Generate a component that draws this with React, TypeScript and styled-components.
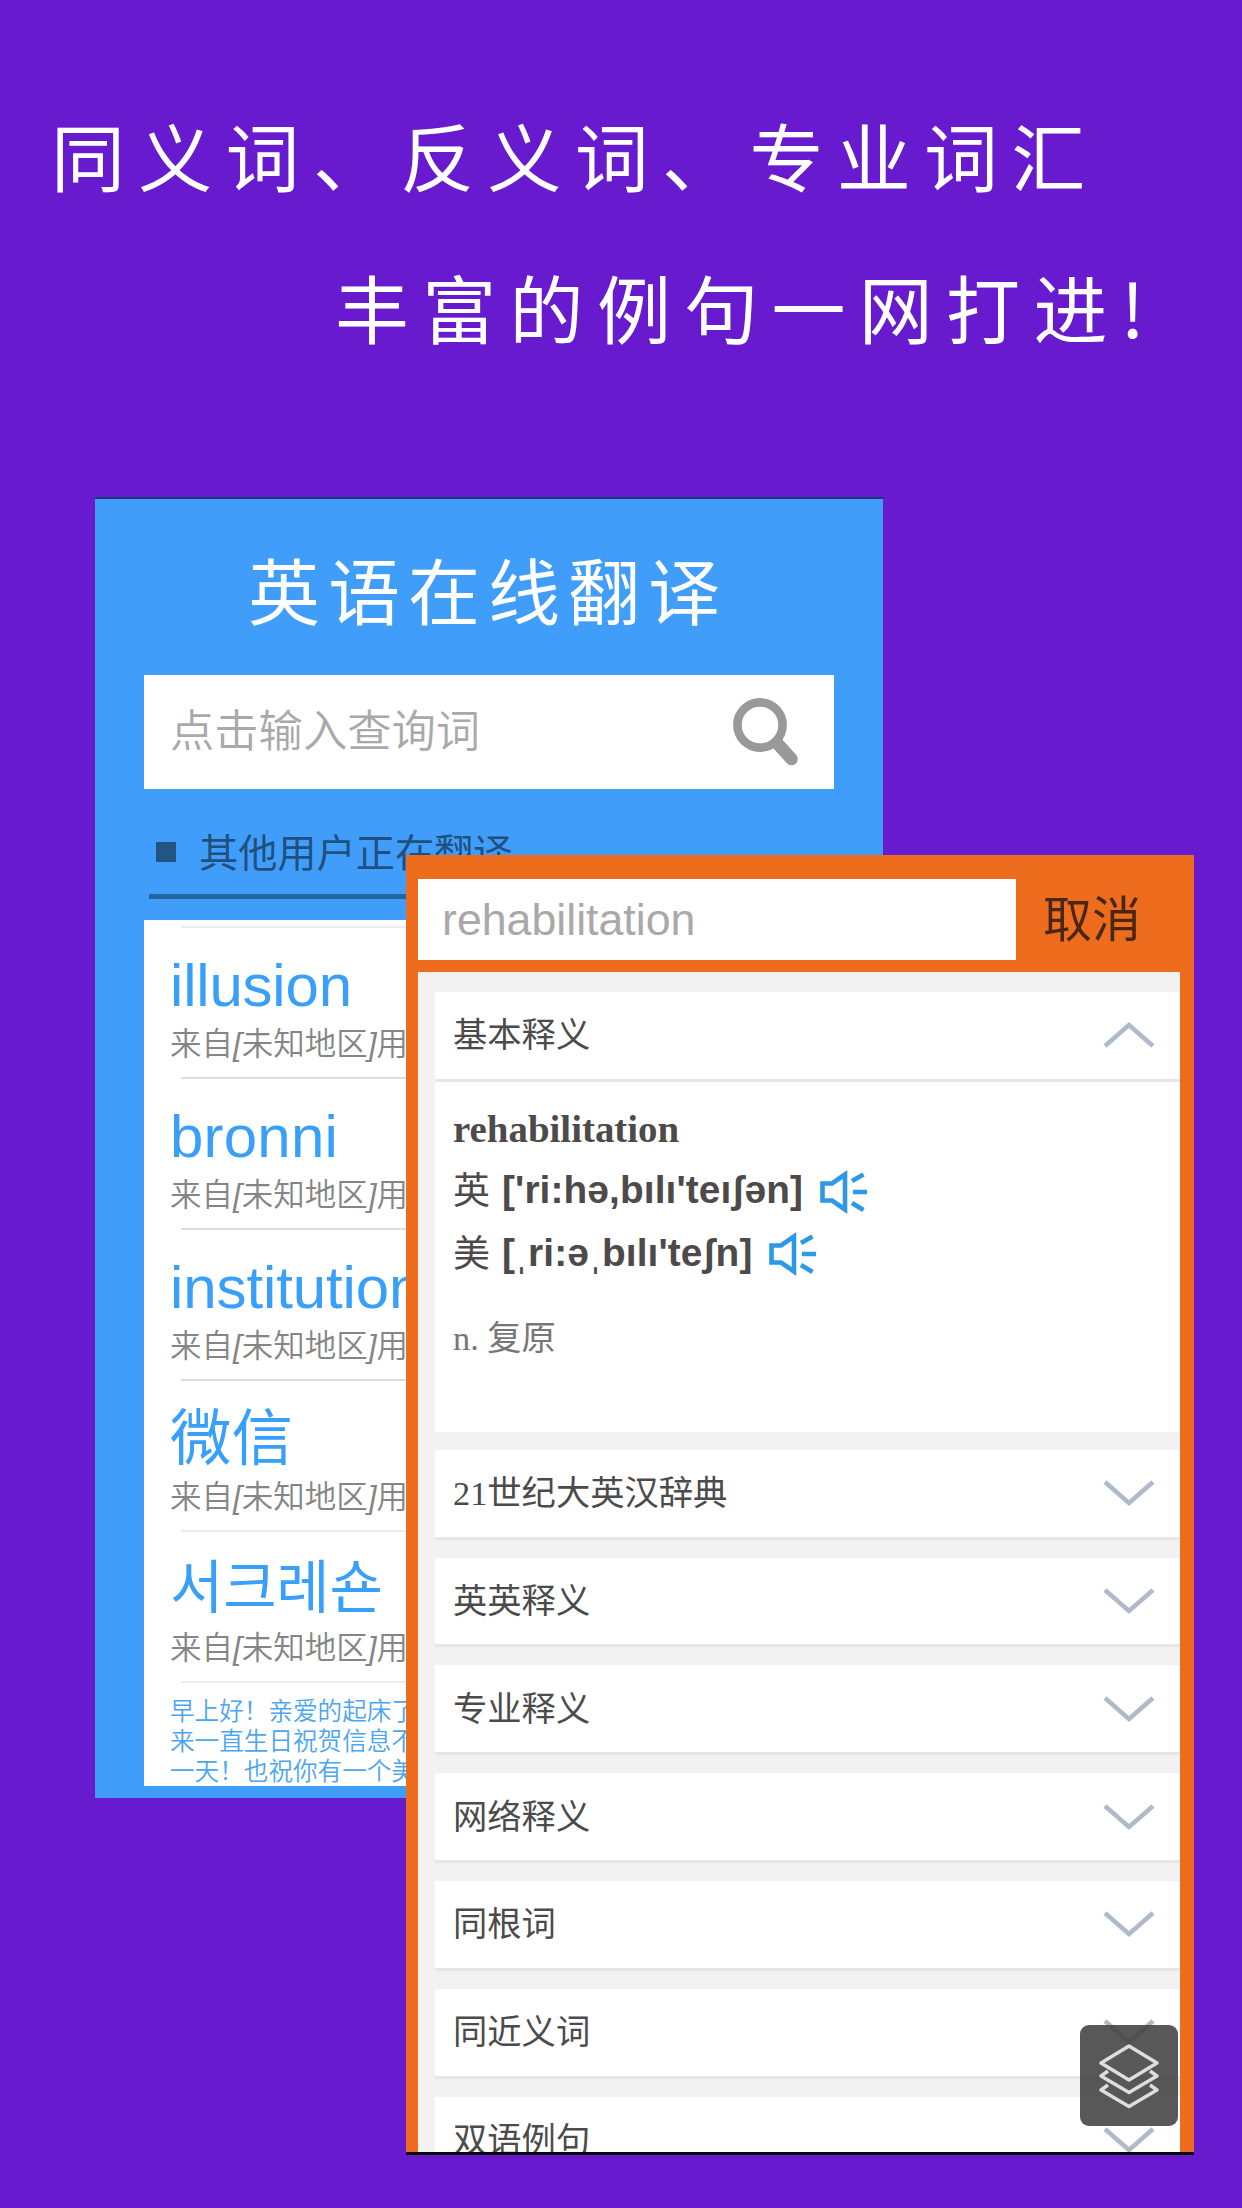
import React from 'react';
import styled, { createGlobalStyle } from 'styled-components';

const sans = `"Liberation Sans", "Noto Sans CJK SC", "Noto Sans CJK KR", sans-serif`;
const serif = `"Liberation Serif", "Noto Sans CJK SC", serif`;
const brush = `KaiTi, STKaiti, "AR PL UKai CN", "Noto Sans CJK SC", sans-serif`;

const Global = createGlobalStyle`
  *, *::before, *::after { box-sizing: border-box; }
  html, body { margin: 0; padding: 0; background: #681bce; }
`;

const Poster = styled.main`
  position: relative;
  width: 1242px;
  height: 2208px;
  overflow: hidden;
  background: #681bce;
  font-family: ${sans};
  white-space: nowrap;
`;

const Slogan = styled.header`
  display: flex;
  flex-direction: column;
  padding-top: 97px;
`;

const SloganLine = styled.h1<{ $indent: number }>`
  margin: 0;
  padding-left: ${p => p.$indent}px;
  height: 152px;
  font: 400 74px/114px ${brush};
  letter-spacing: 13.3px;
  color: #fff;
`;

/* Two app windows lying freely on the poster */
const Window = styled.section<{ $x: number; $y: number; $h: number; $color: string }>`
  position: absolute;
  left: ${p => p.$x}px;
  top: ${p => p.$y}px;
  width: 788px;
  height: ${p => p.$h}px;
  overflow: hidden;
  background: ${p => p.$color};
  display: flex;
  flex-direction: column;
`;

const HomeWindow = styled(Window)`
  border-top: 2px solid #23307a;
  padding: 0 49px 12px;
`;

const AppTitle = styled.h2`
  margin: 0;
  padding: 36px 0 0 104px;
  height: 176px;
  font: 400 72px/106px ${brush};
  letter-spacing: 8px;
  color: #fff;
`;

const SearchBox = styled.div`
  display: flex;
  align-items: center;
  justify-content: space-between;
  width: 690px;
  height: 114px;
  padding: 0 35px 0 26px;
  background: #fff;
`;

const Placeholder = styled.span`
  font: 350 44.3px/60px ${sans};
  color: #a9a9a9;
`;

const FeedHeading = styled.div`
  display: flex;
  align-items: center;
  gap: 23px;
  width: 685px;
  height: 110px;
  margin: 0 0 21px 5px;
  padding: 24px 0 0 7px;
  border-bottom: 5px solid #24659f;
  font: 400 39.2px/50px ${sans};
  color: #1f507f;
`;

const Bullet = styled.i`
  width: 20px;
  height: 20px;
  margin-top: -3px;
  background: #225583;
`;

const Feed = styled.ul`
  flex: 1;
  min-height: 0;
  width: 690px;
  margin: 0;
  padding: 6px 0 0 26px;
  list-style: none;
  overflow: hidden;
  background: #fff;
`;

const FeedItem = styled.li<{ $faint: boolean }>`
  height: 151.1px;
  padding-top: 23px;
  background: linear-gradient(#000, #000) 11px 0 / 640px 2px no-repeat;
  background-image: ${p => (p.$faint ? 'linear-gradient(#ececec, #ececec)' : 'linear-gradient(#dcdcdc, #dcdcdc)')};
`;

const Word = styled.div<{ $size: number; $spacing: number; $height: number }>`
  height: 73px;
  font: 400 ${p => p.$size}px/${p => p.$height}px ${sans};
  letter-spacing: ${p => p.$spacing}px;
  color: #38a0fb;
`;

const Origin = styled.div`
  font: 350 31.5px/44px ${sans};
  color: #858585;
`;

const Note = styled.li`
  padding-top: 16px;
  background: linear-gradient(#ececec, #ececec) 11px 0 / 640px 2px no-repeat;
  font: 350 24.6px/30px ${sans};
  color: #4ba5f3;
`;

const DictWindow = styled(Window)`
  border-bottom: 3px solid #08060a;
  padding: 24px 14px 0 12px;
`;

const QueryBar = styled.div`
  display: flex;
  align-items: stretch;
  height: 93px;
  padding-bottom: 12px;
`;

const Query = styled.div`
  width: 598px;
  padding-left: 24px;
  background: #fff;
  font: 400 44.7px/82px ${sans};
  color: #a9a9a9;
`;

const Cancel = styled.span`
  padding-left: 27px;
  font: 400 49px/83px ${sans};
  color: #4a2712;
`;

const Results = styled.div`
  flex: 1;
  min-height: 0;
  display: flex;
  flex-direction: column;
  gap: 18px;
  padding: 20px 0 0 17px;
  overflow: hidden;
  background: #f2f2f2;
`;

const Card = styled.article`
  flex: none;
  background: #fff;
`;

const CardHead = styled.div`
  display: flex;
  align-items: center;
  justify-content: space-between;
  height: 89.8px;
  padding: 0 25px 0 18px;
  border-bottom: 3px solid #e6e6e6;
  font: 400 34.3px/50px ${serif};
  color: #4b4b4b;
`;

const Entry = styled.div`
  height: 350px;
  padding: 25px 0 0 18px;
  color: #4e4a4a;
`;

const Headword = styled.div`
  height: 52px;
  font: 700 38.9px/44px ${serif};
`;

const Phonetic = styled.div`
  display: flex;
  align-items: center;
  height: 62.5px;
  font: 700 38.8px/50px "Liberation Sans", "DejaVu Sans", sans-serif;

  span {
    letter-spacing: 0.12px;
    margin: 0 16px 0 12px;
  }

  svg {
    margin-top: 3px;
  }
`;

const Region = styled.b`
  height: 54px;
  font: 400 37px/50px "Noto Sans CJK SC", sans-serif;
`;

const Meaning = styled.div`
  margin-top: 29px;
  font: 400 34.3px/50px ${serif};
  color: #777;
`;

const LayersButton = styled.button`
  position: absolute;
  left: 674px;
  top: 1170px;
  width: 98px;
  height: 101px;
  display: grid;
  place-items: center;
  padding: 0;
  border: 0;
  border-radius: 9px;
  background: rgba(65, 65, 65, 0.88);
`;

const SearchIcon = () => (
  <svg width="66" height="70" viewBox="0 0 66 70" fill="none" stroke="#999">
    <circle cx="27" cy="28" r="22.6" strokeWidth="8.6" />
    <path d="M44 46 L58.5 62" strokeWidth="12.5" strokeLinecap="round" />
  </svg>
);

const Chevron = ({ up }: { up?: boolean }) => (
  <svg width="52" height="28" viewBox="0 0 52 28" fill="none" stroke="#b1bac9" strokeWidth="4.6">
    <path d={up ? 'M2 25 L26 4 L50 25' : 'M2 3 L26 24 L50 3'} />
  </svg>
);

const Speaker = () => (
  <svg width="48" height="44" viewBox="0 0 48 44" fill="none" stroke="#2c98e8" strokeWidth="4.6">
    <path d="M3.5 13.5 H13 L26 4.5 V39.5 L13 30.5 H3.5 Z" />
    <path d="M33 11 L44.5 4.5 M34 22 H48 M33 33 L44.5 40" />
  </svg>
);

const Layers = () => (
  <svg width="60" height="66" viewBox="0 0 60 66" fill="none" stroke="#dedede" strokeWidth="3.4" strokeLinejoin="round">
    <path d="M30 3 L58 20 L30 37 L2 20 Z" />
    <path d="M9 28 L2 33 L30 49.5 L58 33 L51 28" />
    <path d="M9 42 L2 47 L30 63.5 L58 47 L51 42" />
  </svg>
);

const feed = [
  { word: 'illusion', size: 60, spacing: -0.2, height: 73 },
  { word: 'bronni', size: 60, spacing: 0.2, height: 73 },
  { word: 'institution', size: 60, spacing: -0.1, height: 73 },
  { word: '微信', size: 61.5, spacing: 0, height: 73 },
  { word: '서크레숀', size: 58, spacing: -0.2, height: 69 },
];

const sections = ['21世纪大英汉辞典', '英英释义', '专业释义', '网络释义', '同根词', '同近义词', '双语例句'];

export default function App() {
  return (
    <Poster>
      <Global />
      <Slogan>
        <SloganLine $indent={51}>同义词、反义词、专业词汇</SloganLine>
        <SloganLine $indent={335}>丰富的例句一网打进!</SloganLine>
      </Slogan>

      <HomeWindow $x={95} $y={497} $h={1301} $color="#409efa">
        <AppTitle>英语在线翻译</AppTitle>
        <SearchBox>
          <Placeholder>点击输入查询词</Placeholder>
          <SearchIcon />
        </SearchBox>
        <FeedHeading>
          <Bullet />
          其他用户正在翻译
        </FeedHeading>
        <Feed>
          {feed.map((item, i) => (
            <FeedItem key={item.word} $faint={i === 0 || i === 4}>
              <Word $size={item.size} $spacing={item.spacing} $height={item.height}>{item.word}</Word>
              <Origin>来自<em>[</em>未知地区<em>]</em>用户</Origin>
            </FeedItem>
          ))}
          <Note>
            早上好！亲爱的起床了<br />
            来一直生日祝贺信息不<br />
            一天！也祝你有一个美
          </Note>
        </Feed>
      </HomeWindow>

      <DictWindow $x={406} $y={855} $h={1300} $color="#ee6c1e">
        <QueryBar>
          <Query>rehabilitation</Query>
          <Cancel>取消</Cancel>
        </QueryBar>
        <Results>
          <Card>
            <CardHead>
              基本释义
              <Chevron up />
            </CardHead>
            <Entry>
              <Headword>rehabilitation</Headword>
              <Phonetic>
                <Region>英</Region>
                <span>['ri:hə,bılı'teıʃən]</span>
                <Speaker />
              </Phonetic>
              <Phonetic>
                <Region>美</Region>
                <span>[ˌri:əˌbılı'teʃn]</span>
                <Speaker />
              </Phonetic>
              <Meaning>n. 复原</Meaning>
            </Entry>
          </Card>
          {sections.map(name => (
            <Card key={name}>
              <CardHead>
                {name}
                <Chevron />
              </CardHead>
            </Card>
          ))}
        </Results>
        <LayersButton>
          <Layers />
        </LayersButton>
      </DictWindow>
    </Poster>
  );
}
